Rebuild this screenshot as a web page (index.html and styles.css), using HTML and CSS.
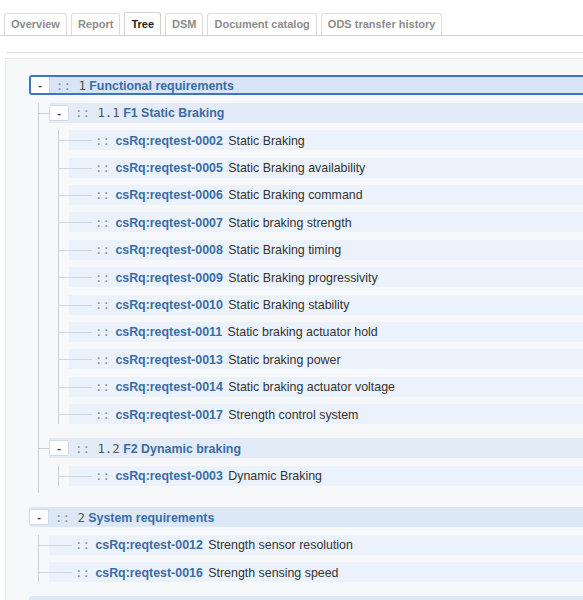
FILE: index.html
```html
<!DOCTYPE html>
<html lang="en">
<head>
  <meta charset="UTF-8">
  <title>Requirements tree</title>
  <link rel="stylesheet" href="styles.css">
</head>
<body>

  <ul class="tabs">
    <li class="tab">Overview</li>
    <li class="tab">Report</li>
    <li class="tab active">Tree</li>
    <li class="tab">DSM</li>
    <li class="tab">Document catalog</li>
    <li class="tab">ODS transfer history</li>
  </ul>

  <div class="divider"></div>

  <div class="panel">
    <ul class="tree">

      <li class="group">
        <div class="row root selected">
          <span class="toggle">-</span>
          <span class="label"><span class="num"><span class="dots">::</span> 1</span> <a class="name">Functional requirements</a></span>
        </div>
        <ul>
          <li class="group">
            <div class="row">
              <span class="toggle">-</span>
              <span class="label"><span class="num"><span class="dots">::</span> 1.1</span> <a class="name">F1 Static Braking</a></span>
            </div>
            <ul>
              <li class="leaf"><div class="row"><span class="spacer"></span><span class="label"><span class="dots">::</span> <a class="name">csRq:reqtest-0002</a> <span class="desc">Static Braking</span></span></div></li>
              <li class="leaf"><div class="row"><span class="spacer"></span><span class="label"><span class="dots">::</span> <a class="name">csRq:reqtest-0005</a> <span class="desc">Static Braking availability</span></span></div></li>
              <li class="leaf"><div class="row"><span class="spacer"></span><span class="label"><span class="dots">::</span> <a class="name">csRq:reqtest-0006</a> <span class="desc">Static Braking command</span></span></div></li>
              <li class="leaf"><div class="row"><span class="spacer"></span><span class="label"><span class="dots">::</span> <a class="name">csRq:reqtest-0007</a> <span class="desc">Static braking strength</span></span></div></li>
              <li class="leaf"><div class="row"><span class="spacer"></span><span class="label"><span class="dots">::</span> <a class="name">csRq:reqtest-0008</a> <span class="desc">Static Braking timing</span></span></div></li>
              <li class="leaf"><div class="row"><span class="spacer"></span><span class="label"><span class="dots">::</span> <a class="name">csRq:reqtest-0009</a> <span class="desc">Static Braking progressivity</span></span></div></li>
              <li class="leaf"><div class="row"><span class="spacer"></span><span class="label"><span class="dots">::</span> <a class="name">csRq:reqtest-0010</a> <span class="desc">Static Braking stability</span></span></div></li>
              <li class="leaf"><div class="row"><span class="spacer"></span><span class="label"><span class="dots">::</span> <a class="name">csRq:reqtest-0011</a> <span class="desc">Static braking actuator hold</span></span></div></li>
              <li class="leaf"><div class="row"><span class="spacer"></span><span class="label"><span class="dots">::</span> <a class="name">csRq:reqtest-0013</a> <span class="desc">Static braking power</span></span></div></li>
              <li class="leaf"><div class="row"><span class="spacer"></span><span class="label"><span class="dots">::</span> <a class="name">csRq:reqtest-0014</a> <span class="desc">Static braking actuator voltage</span></span></div></li>
              <li class="leaf"><div class="row"><span class="spacer"></span><span class="label"><span class="dots">::</span> <a class="name">csRq:reqtest-0017</a> <span class="desc">Strength control system</span></span></div></li>
            </ul>
          </li>
          <li class="group">
            <div class="row">
              <span class="toggle">-</span>
              <span class="label"><span class="num"><span class="dots">::</span> 1.2</span> <a class="name">F2 Dynamic braking</a></span>
            </div>
            <ul>
              <li class="leaf"><div class="row"><span class="spacer"></span><span class="label"><span class="dots">::</span> <a class="name">csRq:reqtest-0003</a> <span class="desc">Dynamic Braking</span></span></div></li>
            </ul>
          </li>
        </ul>
      </li>

      <li class="group">
        <div class="row root">
          <span class="toggle">-</span>
          <span class="label"><span class="num"><span class="dots">::</span> 2</span> <a class="name">System requirements</a></span>
        </div>
        <ul>
          <li class="leaf"><div class="row"><span class="spacer"></span><span class="label"><span class="dots">::</span> <a class="name">csRq:reqtest-0012</a> <span class="desc">Strength sensor resolution</span></span></div></li>
          <li class="leaf"><div class="row"><span class="spacer"></span><span class="label"><span class="dots">::</span> <a class="name">csRq:reqtest-0016</a> <span class="desc">Strength sensing speed</span></span></div></li>
        </ul>
      </li>

      <!-- next root, still loading -->
      <li class="group">
        <div class="row root"></div>
      </li>

    </ul>
  </div>

</body>
</html>
```

FILE: styles.css
```css
body {
  margin: 0;
  background: #fff;
  color: #333;
  font-family: "Liberation Sans", Arial, sans-serif;
  overflow: hidden;
}

/* tab strip */
.tabs {
  list-style: none;
  margin: 0;
  padding: 13px 0 0 4px;
  display: flex;
  gap: 4px;
  border-bottom: 1px solid #d2d2d2;
  height: 22px;
}

.tab {
  box-sizing: border-box;
  height: 22px;
  padding: 0 6px;
  line-height: 21px;
  font-size: 11px;
  font-weight: bold;
  color: #8c8c8c;
  background: #fff;
  border: 1px solid #dcdcdc;
  border-bottom: none;
  border-radius: 3px 3px 0 0;
  white-space: nowrap;
}

.tab.active {
  color: #222;
  height: 23px;
  margin-top: -1px;
  line-height: 23px;
  border-color: #d2d2d2;
}

.divider {
  margin: 16px 0 0 6px;
  border-top: 1px solid #e0e0e0;
}

.panel {
  margin: 5px 0 0 5px;
  width: 720px;
  height: 600px;
  background: #f7f8fa;
  border: 1px solid #e8e9eb;
  padding: 9px 0 0 23px;
}

/* tree */
.tree, .tree ul {
  list-style: none;
  margin: 0;
  padding: 0;
}

.tree ul {
  margin-left: 9px;
  padding-left: 10px;
  border-left: 1px solid #c7d0da;
}

.tree li {
  position: relative;
  margin-top: 7.4px;
}

.tree li.group {
  padding-bottom: 7px;
}

.tree ul li::before {
  content: '';
  position: absolute;
  left: -11px;
  top: 10px;
  width: 11px;
  border-top: 1px solid #c7d0da;
}

.tree ul li.leaf::before {
  width: 34px;
  border-top-color: #cdd7e2;
}

.row {
  display: flex;
  align-items: center;
  box-sizing: border-box;
  height: 20px;
  background: #e3ebf8;
  white-space: nowrap;
  font-size: 12.4px;
}

.row.root {
  background: #dde8f7;
  border-radius: 3px 0 0 3px;
}

.row.selected {
  background: #d9e5f6;
  border: 2px solid #3d74c2;
  border-right: none;
}

.leaf .row {
  background: #ebf2fc;
}

.toggle {
  box-sizing: border-box;
  width: 20px;
  height: 16px;
  flex: none;
  display: flex;
  align-items: center;
  justify-content: center;
  background: #fff;
  border: 1px solid #d3dae3;
  border-radius: 2px;
  font-size: 11px;
  font-weight: bold;
  color: #333;
}

.selected .toggle {
  width: 19px;
  border: none;
  border-right: 1px solid #c9d5e6;
  border-radius: 1px 0 0 1px;
}

.spacer {
  width: 20px;
  flex: none;
}

.label {
  padding-left: 6px;
}

.num, .dots {
  font-family: "DejaVu Sans Mono", monospace;
  font-size: 12.4px;
  color: #555;
}

.dots {
  color: #8a8f96;
}

.leaf .dots {
  margin-right: 2px;
}

.name {
  font-weight: bold;
  color: #3b6ca5;
}

.desc {
  margin-left: 2px;
  color: #333;
}
```
